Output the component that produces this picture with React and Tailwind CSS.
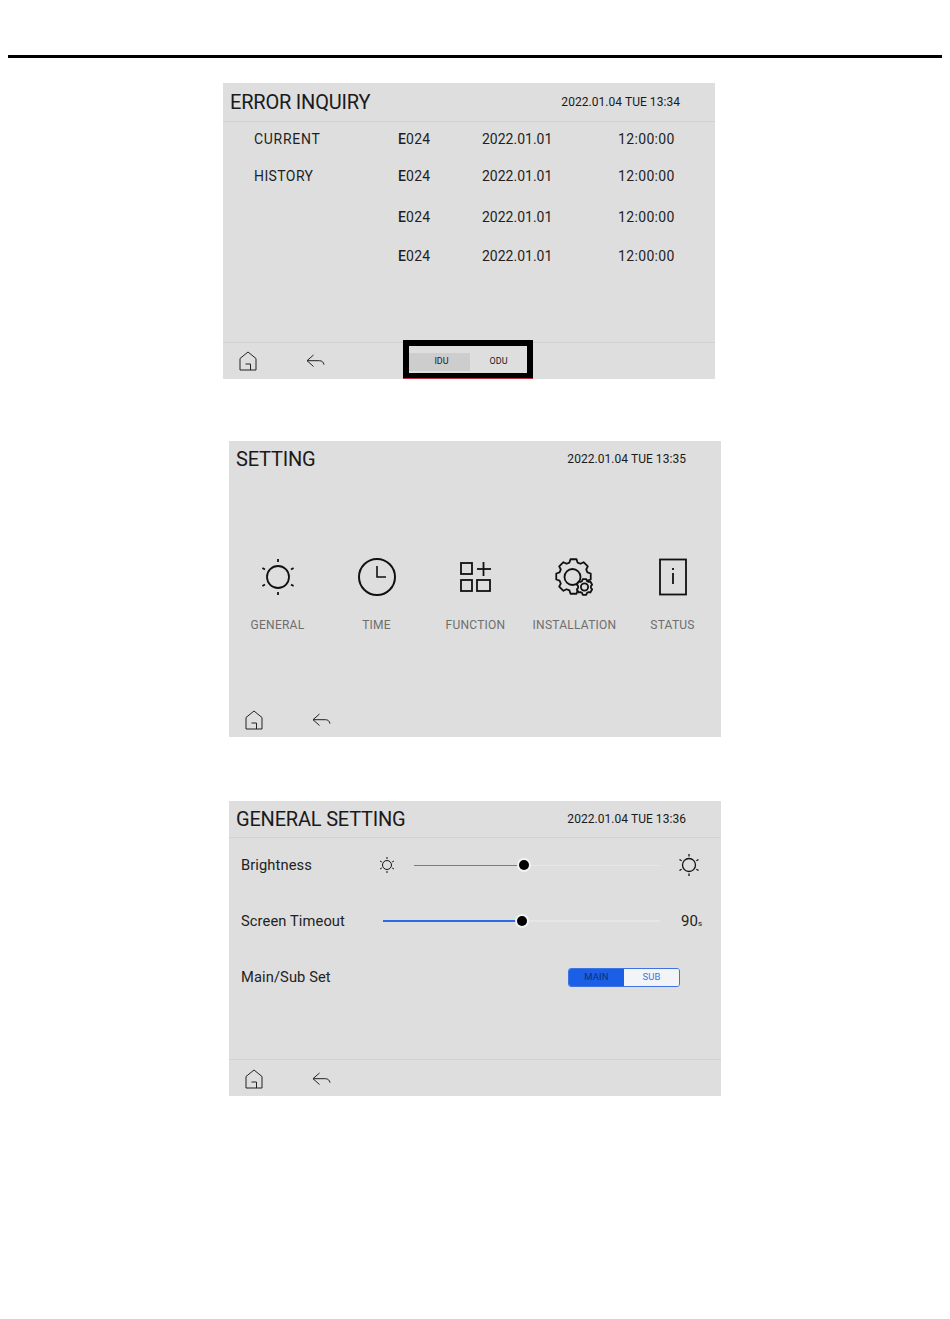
function gearPath(cx, cy, rOut, rIn, teeth) {
  const pts = []
  const step = (Math.PI * 2) / teeth
  for (let i = 0; i < teeth; i++) {
    const a = i * step - Math.PI / 2
    const p = (r, off) => `${(cx + r * Math.cos(a + off * step)).toFixed(2)} ${(cy + r * Math.sin(a + off * step)).toFixed(2)}`
    pts.push(p(rOut, -0.22), p(rOut, 0.22), p(rIn, 0.36), p(rIn, 0.64))
  }
  return `M${pts.join('L')}Z`
}

const sunRays = [0, 60, 120, 180, 240, 300]

function Sun({ size, r, from, to, width = 1.5 }) {
  const c = size / 2
  return (
    <svg width={size} height={size} viewBox={`0 0 ${size} ${size}`} fill="none" stroke="#111" strokeWidth={width}>
      <circle cx={c} cy={c} r={r} />
      {sunRays.map((deg) => {
        const a = (deg * Math.PI) / 180
        return <line key={deg} x1={c + from * Math.sin(a)} y1={c - from * Math.cos(a)} x2={c + to * Math.sin(a)} y2={c - to * Math.cos(a)} />
      })}
    </svg>
  )
}

function Clock() {
  return (
    <svg width="40" height="40" viewBox="0 0 40 40" fill="none" stroke="#111" strokeWidth="2">
      <circle cx="20" cy="20" r="18" />
      <polyline points="20,9 20,20 29,20" strokeWidth="1.6" />
    </svg>
  )
}

function Grid() {
  return (
    <svg width="32" height="32" viewBox="0 0 32 32" fill="none" stroke="#111" strokeWidth="1.8">
      <rect x="1" y="2" width="11" height="11" />
      <rect x="1" y="19" width="11" height="11" />
      <rect x="17" y="19" width="13" height="11" />
      <line x1="23.5" y1="1" x2="23.5" y2="15" />
      <line x1="17" y1="8" x2="31" y2="8" />
    </svg>
  )
}

function Gear() {
  return (
    <svg width="40" height="40" viewBox="0 0 40 40" fill="none" stroke="#111" strokeWidth="1.8" strokeLinejoin="round">
      <path d={gearPath(18.5, 19.5, 17.5, 14.5, 8)} />
      <circle cx="17.5" cy="20" r="8" />
      <path d={gearPath(29.5, 30, 8, 6.5, 6)} fill="#dedede" />
      <circle cx="29.5" cy="30" r="3.6" />
    </svg>
  )
}

function InfoBox() {
  return (
    <svg width="30" height="38" viewBox="0 0 30 38" fill="none" stroke="#111" strokeWidth="1.8">
      <rect x="2" y="1.5" width="26" height="35" />
      <line x1="15" y1="15" x2="15" y2="26" />
      <line x1="15" y1="10" x2="15" y2="12" />
    </svg>
  )
}

function Home() {
  return (
    <svg width="18" height="20" viewBox="0 0 18 20" fill="none" stroke="#222" strokeWidth="1">
      <path d="M1 7.500 9 1l8 6.500V19H1Z" />
      <path d="M6.500 13H11.500V19" />
    </svg>
  )
}

function Back() {
  return (
    <svg width="22" height="14" viewBox="0 0 22 14" fill="none" stroke="#222" strokeWidth="1">
      <path d="M7.500 1 1 6.700l6.500 5.800" />
      <path d="M1 6.700h12.500c2.500 0 4 1.500 4.500 4" />
    </svg>
  )
}

function Footer({ children, className = '' }) {
  return (
    <div className={`flex h-[37px] items-center border-t border-[#d2d2d2] pl-[16px] ${className}`}>
      <Home />
      <div className="ml-[49px]"><Back /></div>
      {children}
    </div>
  )
}

function Header({ title, date, className = 'h-[38px]' }) {
  return (
    <div className={`flex items-center justify-between pl-[7px] pr-[35px] text-[#1a1a1a] ${className}`}>
      <span className="text-[20px] leading-none tracking-[-0.2px]">{title}</span>
      <span className="text-[12px] leading-none tracking-[0.05px]">{date}</span>
    </div>
  )
}

function ErrorRow({ label, className = '', spacing = '' }) {
  return (
    <div className={`grid h-[20px] grid-cols-[144px_84px_136px_80px] items-center pl-[31px] text-[14px] text-[#1f1f1f] ${className}`}>
      <span className={spacing}>{label}</span>
      <span className="tracking-[0.2px]"><span className="font-medium">E</span>024</span>
      <span>2022.01.01</span>
      <span className="tracking-[0.35px]">12:00:00</span>
    </div>
  )
}

function ErrorPanel() {
  return (
    <div className="relative ml-[223px] flex h-[296px] w-[492px] flex-col bg-[#dedede]">
      <Header title="ERROR INQUIRY" date="2022.01.04 TUE 13:34" />
      <div className="flex-1 border-t border-[#d2d2d2] pt-[7px]">
        <ErrorRow label="CURRENT" spacing="tracking-[0.7px]" />
        <ErrorRow label="HISTORY" spacing="tracking-[0.4px]" className="mt-[17px]" />
        <ErrorRow className="mt-[21px]" />
        <ErrorRow className="mt-[19px]" />
      </div>
      <Footer>
        <div className="ml-[81px] mt-[2px] flex h-[18px] w-[118px] text-[9px] text-[#222]">
          <span className="flex w-[61px] items-center justify-center bg-[#cdcdcd] pl-[4px]">IDU</span>
          <span className="flex flex-1 items-center justify-center">ODU</span>
        </div>
      </Footer>
      <div className="absolute left-[180px] top-[257px] h-[38px] w-[130px] border-[6px] border-b-[5px] border-black shadow-[0_1px_0_#b5303c]" />
    </div>
  )
}

const menu = [
  ['GENERAL', <Sun size={36} r={11} from={15} to={18} width={1.8} />],
  ['TIME', <Clock />],
  ['FUNCTION', <Grid />],
  ['INSTALLATION', <Gear />],
  ['STATUS', <InfoBox />],
]

function SettingPanel() {
  return (
    <div className="ml-[229px] mt-[62px] flex h-[296px] w-[492px] flex-col bg-[#dedede]">
      <Header title="SETTING" date="2022.01.04 TUE 13:35" className="h-[36px]" />
      <div className="-ml-px grid flex-1 grid-cols-[99px_99px_99px_99px_97px] pt-[78px]">
        {menu.map(([label, icon]) => (
          <div key={label} className="flex flex-col items-center">
            <div className="flex h-[44px] items-center justify-center">{icon}</div>
            <span className="mt-[19px] text-[12px] leading-[14px] tracking-[0.25px] text-[#6e6e6e]">{label}</span>
          </div>
        ))}
      </div>
      <Footer className="border-transparent pt-[2px]" />
    </div>
  )
}

function Slider({ left, filled, total, weight, color }) {
  return (
    <div className={`flex items-center ${left}`}>
      <div className={`${weight} ${color}`} style={{ width: filled }} />
      <div className="z-10 -mx-[5px] h-[10px] w-[10px] shrink-0 rounded-full bg-black shadow-[0_0_0_2px_#f3f3f3]" />
      <div className={`${weight} bg-[#e6e6e6]`} style={{ width: total - filled }} />
    </div>
  )
}

function SettingRow({ label, children }) {
  return (
    <div className="flex h-[54px] items-center pl-[12px] text-[14.7px] tracking-[0.1px] text-[#222]">
      <span className="w-[131px] shrink-0">{label}</span>
      {children}
    </div>
  )
}

function GeneralPanel() {
  return (
    <div className="ml-[229px] mt-[64px] flex h-[295px] w-[492px] flex-col bg-[#dedede]">
      <Header title="GENERAL SETTING" date="2022.01.04 TUE 13:36" className="h-[36px]" />
      <div className="flex flex-1 flex-col gap-[2px] border-t border-[#d2d2d2]">
        <SettingRow label="Brightness">
          <div className="ml-[7px]"><Sun size={16} r={4.500} from={6} to={8} width={1} /></div>
          <Slider left="ml-[19px]" filled={110} total={246} weight="h-px" color="bg-[#4a80f0]" />
          <div className="ml-[18px]"><Sun size={22} r={6.500} from={8.500} to={11} width={1.3} /></div>
        </SettingRow>
        <SettingRow label="Screen Timeout">
          <Slider left="ml-[11px]" filled={139} total={277} weight="h-[2px]" color="bg-[#2f6ae6]" />
          <span className="ml-[21px] text-[15px]">90<span className="text-[8px]">s</span></span>
        </SettingRow>
        <SettingRow label="Main/Sub Set">
          <div className="ml-[196px] flex h-[19px] w-[112px] overflow-hidden rounded-[3px] border border-[#3f74e0] text-[9.500px]">
            <span className="flex w-[55px] items-center justify-center bg-[#1a5fe6] text-[#0f2f7a]">MAIN</span>
            <span className="flex flex-1 items-center justify-center bg-[#f2f4f8] text-[#3f74e0]">SUB</span>
          </div>
        </SettingRow>
      </div>
      <Footer className="pt-[2px]" />
    </div>
  )
}

export default function App() {
  return (
    <div className="min-h-[1319px] bg-white pt-[55px] font-['Roboto',sans-serif]">
      <div className="mx-[8px] h-[3px] bg-black" />
      <div className="mt-[25px]">
        <ErrorPanel />
        <SettingPanel />
        <GeneralPanel />
      </div>
    </div>
  )
}
